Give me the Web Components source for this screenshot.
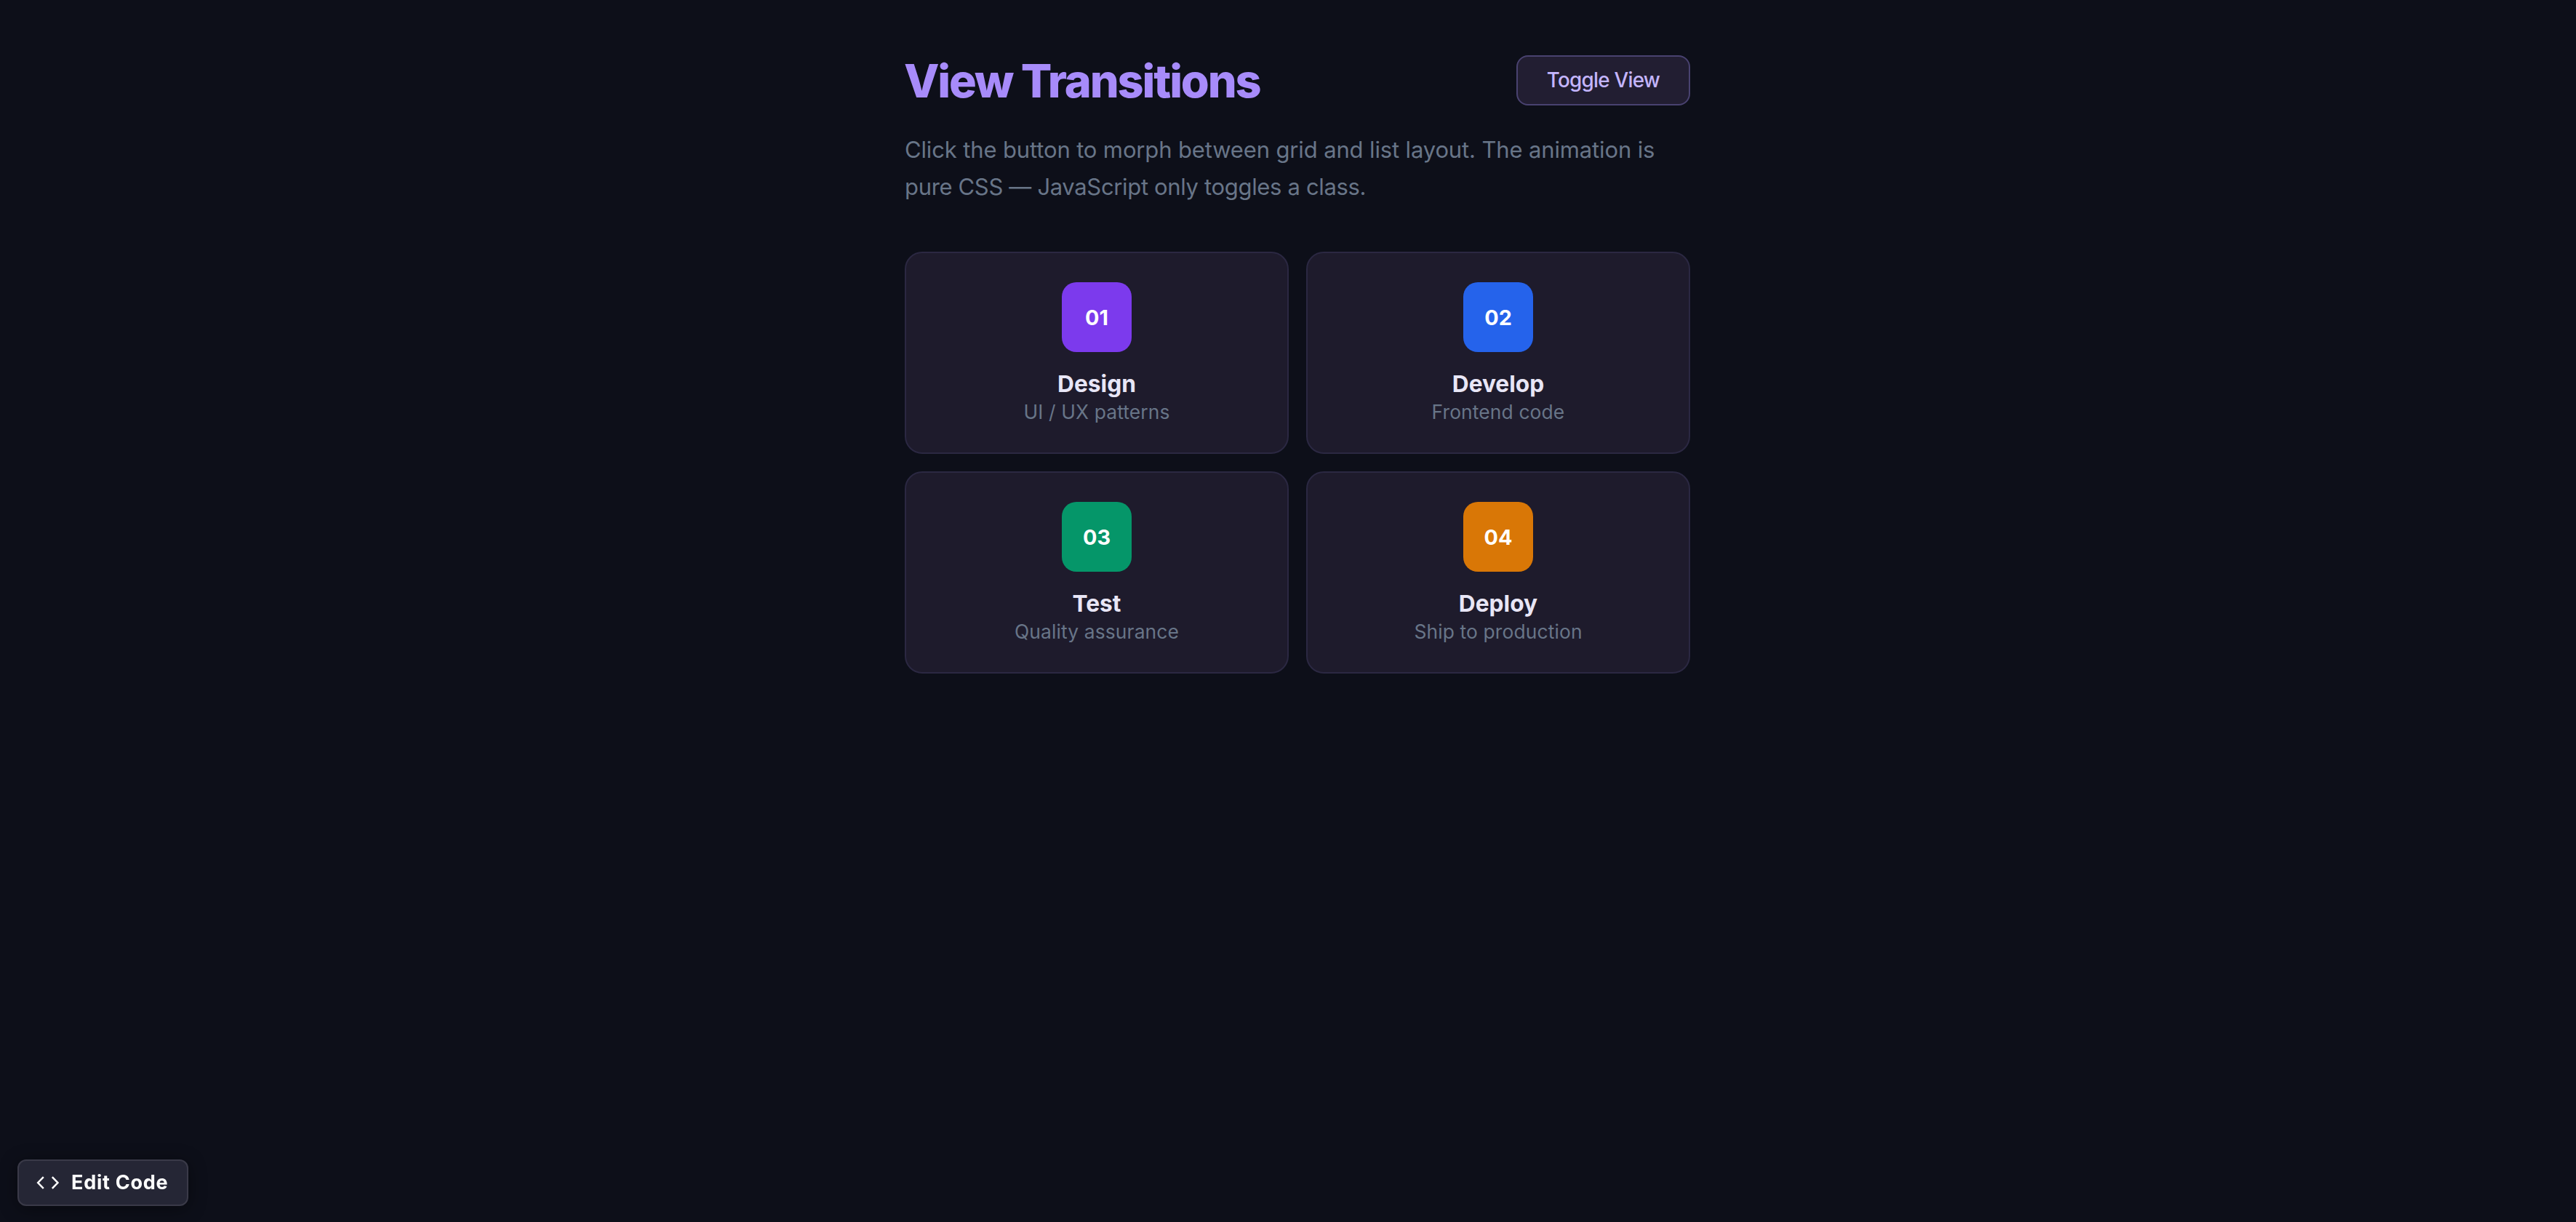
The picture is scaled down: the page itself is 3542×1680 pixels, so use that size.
<!DOCTYPE html>
<html lang="en">
<head>
  <meta charset="utf-8">
  <title>View Transitions</title>
  <style>
    :root {
      --bg-color: #0d0f19;
      --card-color: #1e1b2c;
      --card-border: #2b2842;
      --primary-color: #a78bfa;
      --muted-color: #687588;
      --heading-color: #e8e6f6;
    }

    body {
      margin: 0;
      min-height: 100vh;
      background: var(--bg-color);
      font-family: Inter, sans-serif;
    }
  </style>
</head>
<body>
  <demo-page>
    <span slot="title">View Transitions</span>
    <toggle-button slot="action">Toggle View</toggle-button>
    <step-card number="01" title="Design" text="UI / UX patterns" color="#7c3aed"></step-card>
    <step-card number="02" title="Develop" text="Frontend code" color="#2563eb"></step-card>
    <step-card number="03" title="Test" text="Quality assurance" color="#059669"></step-card>
    <step-card number="04" title="Deploy" text="Ship to production" color="#d97706"></step-card>
  </demo-page>
  <edit-button>Edit Code</edit-button>

  <script>
    class DemoPage extends HTMLElement {
      constructor() {
        super();
        this.attachShadow({ mode: "open" });
      }

      static get styles() {
        return /* css */`
          :host {
            display: block;
            width: 1080px;
            margin-left: 1244px;
            padding-top: 73px;
          }

          .header {
            display: flex;
            align-items: center;
            justify-content: space-between;
            height: 75px;
          }

          h1 {
            margin: 0 0 0 -1px;
            color: var(--primary-color);
            font-size: 63px;
            font-weight: 800;
            line-height: 76px;
            letter-spacing: -2.15px;
          }

          p {
            margin: 32px 0 64px;
            color: var(--muted-color);
            font-size: 31px;
            line-height: 51px;
            letter-spacing: -0.14px;
            white-space: nowrap;
          }

          .last {
            letter-spacing: -0.34px;
          }

          .grid {
            display: grid;
            grid-template-columns: 1fr 1fr;
            gap: 24px;
          }

          :host(.list) .grid {
            grid-template-columns: 1fr;
          }
        `;
      }

      connectedCallback() {
        this.render();
        this.addEventListener("toggle-view", () => this.classList.toggle("list"));
      }

      render() {
        this.shadowRoot.innerHTML = /* html */`
        <style>${DemoPage.styles}</style>
        <header class="header">
          <h1><slot name="title"></slot></h1>
          <slot name="action"></slot>
        </header>
        <p>Click the button to morph between grid and list layout. The animation is<br>
        <span class="last">pure CSS — JavaScript only toggles a class.</span></p>
        <main class="grid"><slot></slot></main>`;
      }
    }

    class ToggleButton extends HTMLElement {
      constructor() {
        super();
        this.attachShadow({ mode: "open" });
      }

      static get styles() {
        return /* css */`
          :host {
            display: block;
          }

          button {
            display: block;
            box-sizing: border-box;
            width: 239px;
            height: 69px;
            padding: 0 0 2px;
            border: 2px solid #494270;
            border-radius: 16px;
            background: #221e32;
            color: #c4b5fd;
            font: 500 27.8px Inter, sans-serif;
            letter-spacing: -0.75px;
            cursor: pointer;
          }
        `;
      }

      connectedCallback() {
        this.render();
        this.shadowRoot.querySelector("button").addEventListener("click", () => {
          this.dispatchEvent(new CustomEvent("toggle-view", { bubbles: true }));
        });
      }

      render() {
        this.shadowRoot.innerHTML = /* html */`
        <style>${ToggleButton.styles}</style>
        <button><slot></slot></button>`;
      }
    }

    class StepCard extends HTMLElement {
      constructor() {
        super();
        this.attachShadow({ mode: "open" });
      }

      static get styles() {
        return /* css */`
          :host {
            display: flex;
            flex-direction: column;
            align-items: center;
            box-sizing: border-box;
            height: 278px;
            padding: 40px;
            border: 2px solid var(--card-border);
            border-radius: 24px;
            background: var(--card-color);
          }

          .number {
            display: flex;
            align-items: center;
            justify-content: center;
            width: 96px;
            height: 96px;
            margin-bottom: 25px;
            border-radius: 20px;
            color: #fff;
            font-size: 28.8px;
            font-weight: 700;
          }

          h2 {
            margin: 0 0 3px;
            color: var(--heading-color);
            font-size: 31.7px;
            font-weight: 700;
            line-height: 38px;
          }

          .text {
            color: var(--muted-color);
            font-size: 26.4px;
            line-height: 32px;
            letter-spacing: 0.13px;
          }
        `;
      }

      connectedCallback() {
        this.render();
      }

      render() {
        this.shadowRoot.innerHTML = /* html */`
        <style>${StepCard.styles}</style>
        <div class="number" style="background: ${this.getAttribute("color")}">${this.getAttribute("number")}</div>
        <h2>${this.getAttribute("title")}</h2>
        <div class="text">${this.getAttribute("text")}</div>`;
      }
    }

    class EditButton extends HTMLElement {
      constructor() {
        super();
        this.attachShadow({ mode: "open" });
      }

      static get styles() {
        return /* css */`
          :host {
            position: fixed;
            left: 24px;
            bottom: 22px;
          }

          button {
            display: flex;
            align-items: center;
            gap: 16px;
            box-sizing: border-box;
            width: 235px;
            height: 64px;
            padding: 0 0 0 24px;
            border: 2px solid #3a3a48;
            border-radius: 12px;
            background: #252635;
            box-shadow: 0 4px 24px rgba(0, 0, 0, 0.4);
            color: #fff;
            font: 700 27px Inter, sans-serif;
            letter-spacing: 0.75px;
            white-space: nowrap;
            cursor: pointer;
          }

          svg {
            flex: none;
            width: 32px;
            height: 32px;
          }

          .label {
            padding-bottom: 2px;
          }
        `;
      }

      connectedCallback() {
        this.render();
      }

      render() {
        this.shadowRoot.innerHTML = /* html */`
        <style>${EditButton.styles}</style>
        <button>
          <svg viewBox="0 0 32 32" fill="none" stroke="#fff" stroke-width="2.5">
            <path d="M9.8 8.2 2.2 16l7.6 7.8M21.8 8.2l7.6 7.8-7.6 7.8" />
          </svg>
          <span class="label"><slot></slot></span>
        </button>`;
      }
    }

    customElements.define("demo-page", DemoPage);
    customElements.define("toggle-button", ToggleButton);
    customElements.define("step-card", StepCard);
    customElements.define("edit-button", EditButton);
  </script>
</body>
</html>
